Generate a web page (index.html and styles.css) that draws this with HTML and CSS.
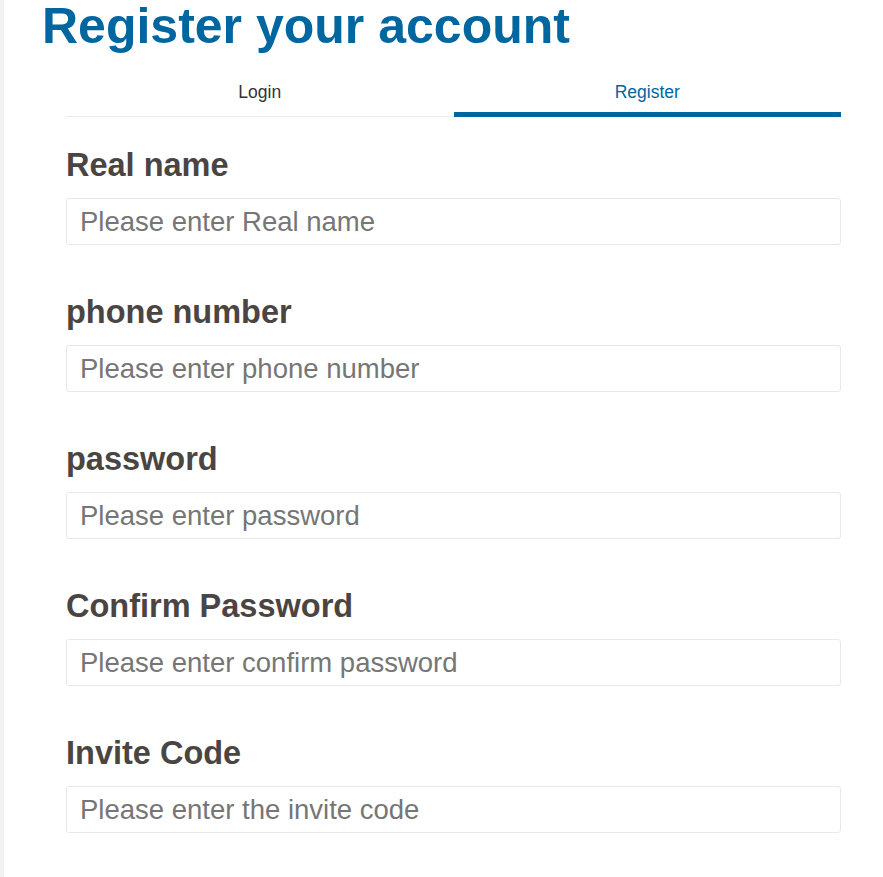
FILE: index.html
```html
<!DOCTYPE html>
<html lang="en">
<head>
    <meta charset="UTF-8">
    <meta name="viewport" content="width=device-width, initial-scale=1.0">
    <title>Register your account</title>
    <link rel="stylesheet" href="styles.css">
</head>
<body>
    <div class="page">
        <h1 class="title">Register your account</h1>

        <div class="panel">
            <div class="tabs">
                <a class="tab" href="#">Login</a>
                <a class="tab active" href="#">Register</a>
            </div>

            <form class="register-form">
                <div class="field">
                    <label for="realName">Real name</label>
                    <input type="text" id="realName" placeholder="Please enter Real name">
                </div>
                <div class="field">
                    <label for="phone">phone number</label>
                    <input type="text" id="phone" placeholder="Please enter phone number">
                </div>
                <div class="field">
                    <label for="password">password</label>
                    <input type="password" id="password" placeholder="Please enter password">
                </div>
                <div class="field">
                    <label for="confirmPassword">Confirm Password</label>
                    <input type="password" id="confirmPassword" placeholder="Please enter confirm password">
                </div>
                <div class="field">
                    <label for="inviteCode">Invite Code</label>
                    <input type="text" id="inviteCode" placeholder="Please enter the invite code">
                </div>
            </form>
        </div>
    </div>
</body>
</html>
```

FILE: styles.css
```css
body {
    font-family: "Liberation Sans", Arial, sans-serif;
    background-color: #fff;
    margin: 0;
    padding: 0;
}

.page {
    min-height: 100vh;
    padding: 0 42px 0 38px;
    border-left: 4px solid #f2f2f2;
    background-color: #fff;
    box-sizing: border-box;
}

.title {
    margin: 0;
    font-size: 50px;
    line-height: 52px;
    font-weight: bold;
    color: #0066a0;
}

.panel {
    margin-left: 24px;
}

.tabs {
    display: flex;
    margin-top: 18px;
    border-bottom: 1px solid #ececec;
}

.tab {
    flex: 1;
    text-align: center;
    padding: 12px 0 10px;
    font-size: 17.5px;
    line-height: 20px;
    color: #333;
    text-decoration: none;
    border-bottom: 5px solid transparent;
    margin-bottom: -1px;
}

.tab.active {
    color: #0066a0;
    border-bottom-color: #0066a0;
}

.register-form {
    padding-top: 30px;
}

.field {
    margin-bottom: 49px;
}

.field label {
    display: block;
    margin-bottom: 15px;
    font-size: 32.5px;
    line-height: 36px;
    font-weight: bold;
    color: #4a4542;
}

.field input {
    display: block;
    width: 100%;
    height: 47px;
    padding: 0 13px;
    border: 1px solid #e8e8e8;
    border-radius: 3px;
    box-sizing: border-box;
    font-family: "Liberation Sans", Arial, sans-serif;
    font-size: 27.5px;
    color: #333;
    outline: none;
}

.field input::placeholder {
    color: #767676;
}
```
